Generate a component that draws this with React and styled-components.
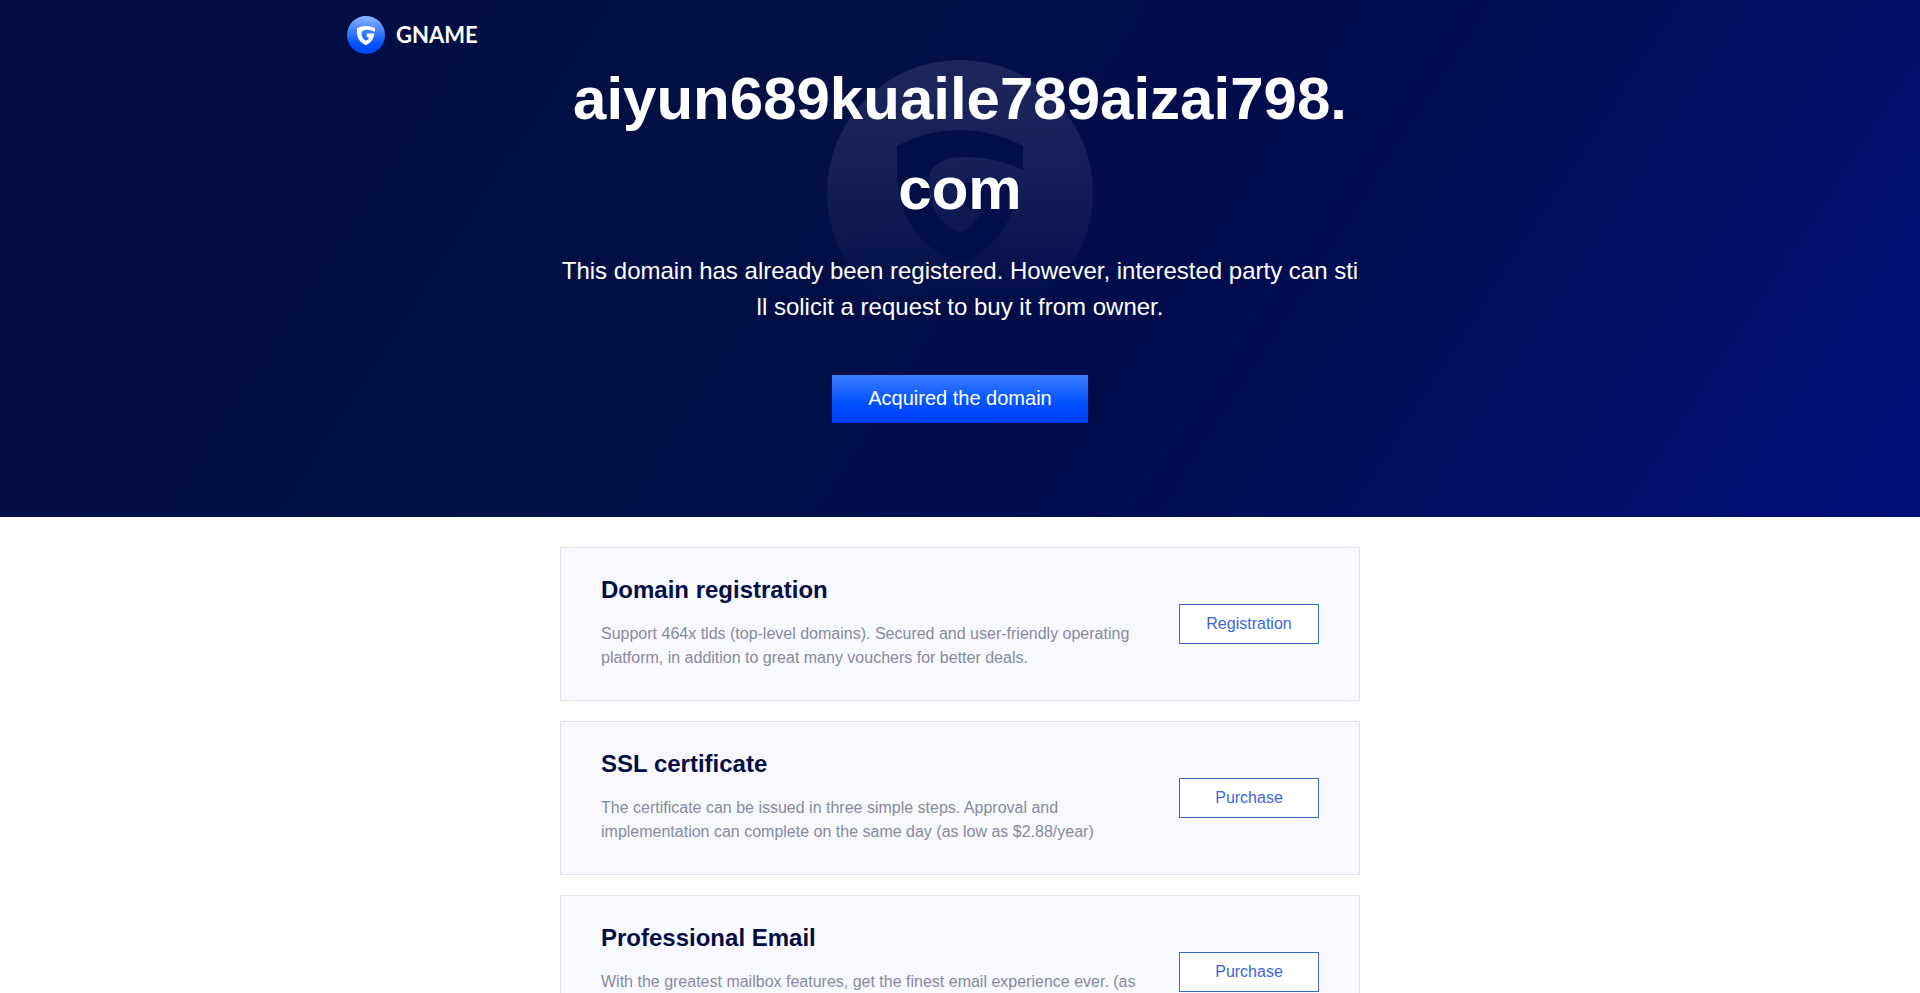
import React from "react";
import styled, { createGlobalStyle } from "styled-components";

const GlobalStyle = createGlobalStyle`
  *, *::before, *::after { box-sizing: border-box; }
  body {
    margin: 0;
    background: #fff;
    font-family: "Liberation Sans", Arial, sans-serif;
  }
  h1, h2, p { margin: 0; }
`;

const Hero = styled.div`
  position: relative;
  padding-bottom: 94px;
  background: linear-gradient(123deg, #010c43 0%, #021044 38%, #010c4e 62%, #000f63 80%, #00107a 100%);
  color: #fff;
`;

const Header = styled.header`
  display: flex;
  align-items: flex-end;
  width: 100%;
  max-width: 1226px;
  height: 54px;
  margin: 0 auto;
`;

const Brand = styled.a`
  display: flex;
  align-items: center;
  gap: 11px;
  color: #fff;
  font: 700 22px/38px Lato, sans-serif;
  text-decoration: none;
`;

const Watermark = styled.svg`
  position: absolute;
  top: 60px;
  left: 50%;
  margin-left: -133px;
  pointer-events: none;
`;

const Intro = styled.main`
  position: relative;
  display: flex;
  flex-direction: column;
  align-items: center;
  width: 100%;
  max-width: 800px;
  margin: 0 auto;
  text-align: center;
  word-break: break-all;
`;

const DomainName = styled.h1`
  font-size: 60px;
  line-height: 90px;
`;

const Notice = styled.p`
  margin-top: 19px;
  font-size: 24px;
  line-height: 36px;
`;

const AcquireButton = styled.button`
  width: 256px;
  height: 48px;
  margin-top: 50px;
  padding: 0 0 2px;
  border: 0;
  background: linear-gradient(180deg, #3c7dff 0%, #0050ff 60%, #003cff 100%);
  color: #fff;
  font: 20px "Liberation Sans", Arial, sans-serif;
  cursor: pointer;
`;

const Services = styled.section`
  display: flex;
  flex-direction: column;
  gap: 20px;
  width: 100%;
  max-width: 800px;
  margin: 0 auto;
  padding: 30px 0;
`;

const Card = styled.article`
  display: flex;
  align-items: center;
  gap: 40px;
  padding: 30px 40px;
  border: 1px solid #dfe2ea;
  background: #f8f9ff;
`;

const CardBody = styled.div`
  flex: 1;
`;

const CardTitle = styled.h2`
  color: #020d44;
  font-size: 24px;
  line-height: 24px;
`;

const CardText = styled.p`
  min-height: 48px;
  margin-top: 20px;
  color: #878a9c;
  font-size: 16px;
  line-height: 24px;
`;

const CardLink = styled.a`
  flex: none;
  width: 140px;
  border: 1px solid #3a69c4;
  background: #fff;
  color: #3c66dc;
  font-size: 16px;
  line-height: 38px;
  text-align: center;
  text-decoration: none;
`;

const SHIELD =
  "M70 86 Q100 70 133 70 Q166 70 196 86 V110 Q167 97 139 97 Q107 97 102 116 Q97 155 133 173 Q148 165 156 150 H143 Q131 140 138 123 H192 C186 165 166 190 133 204 C95 188 70 160 70 112 Z";

const services = [
  {
    title: "Domain registration",
    text: "Support 464x tlds (top-level domains). Secured and user-friendly operating platform, in addition to great many vouchers for better deals.",
    action: "Registration",
  },
  {
    title: "SSL certificate",
    text: "The certificate can be issued in three simple steps. Approval and implementation can complete on the same day (as low as $2.88/year)",
    action: "Purchase",
  },
  {
    title: "Professional Email",
    text: "With the greatest mailbox features, get the finest email experience ever. (as",
    action: "Purchase",
  },
];

export default function App() {
  return (
    <>
      <GlobalStyle />
      <Hero>
        <Watermark width="266" height="266" viewBox="0 0 266 266" aria-hidden="true">
          <defs>
            <linearGradient id="fade" x1="0" y1="0" x2="0" y2="1">
              <stop offset="0" stopColor="#ffe4ff" stopOpacity="0.11" />
              <stop offset="0.4" stopColor="#ffe4ff" stopOpacity="0.08" />
              <stop offset="0.8" stopColor="#ffe4ff" stopOpacity="0.015" />
              <stop offset="1" stopColor="#ffe4ff" stopOpacity="0" />
            </linearGradient>
          </defs>
          <path
            d={"M0 133 A133 133 0 1 1 266 133 A133 133 0 1 1 0 133 Z " + SHIELD}
            fill="url(#fade)"
            fillRule="evenodd"
          />
        </Watermark>
        <Header>
          <Brand href="#">
            <svg width="38" height="38" viewBox="0 0 266 266" aria-hidden="true">
              <defs>
                <linearGradient id="ball" x1="0" y1="0" x2="0" y2="1">
                  <stop offset="0" stopColor="#8cb4ff" />
                  <stop offset="0.5" stopColor="#2d72ff" />
                  <stop offset="0.75" stopColor="#0050ff" />
                  <stop offset="1" stopColor="#0046ff" />
                </linearGradient>
              </defs>
              <circle cx="133" cy="133" r="133" fill="url(#ball)" />
              <path d={SHIELD} fill="#fff" />
            </svg>
            GNAME
          </Brand>
        </Header>
        <Intro>
          <DomainName>aiyun689kuaile789aizai798.com</DomainName>
          <Notice>
            This domain has already been registered. However, interested party can still solicit a request to buy it
            from owner.
          </Notice>
          <AcquireButton type="button">Acquired the domain</AcquireButton>
        </Intro>
      </Hero>
      <Services>
        {services.map((s) => (
          <Card key={s.title}>
            <CardBody>
              <CardTitle>{s.title}</CardTitle>
              <CardText>{s.text}</CardText>
            </CardBody>
            <CardLink href="#">{s.action}</CardLink>
          </Card>
        ))}
      </Services>
    </>
  );
}
